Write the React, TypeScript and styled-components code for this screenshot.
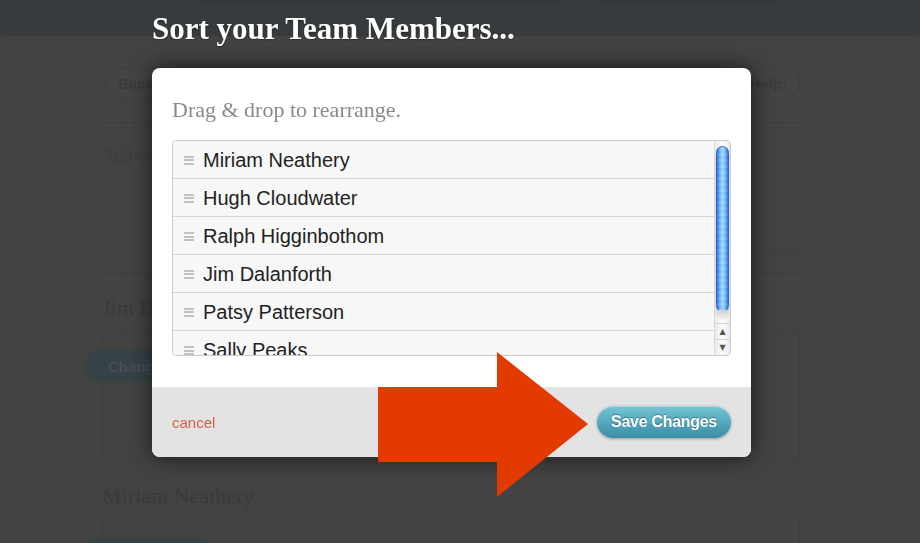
import React from "react";
import styled, { createGlobalStyle } from "styled-components";

const GlobalStyle = createGlobalStyle`
  html, body {
    margin: 0;
    padding: 0;
    background: #434343;
    overflow: hidden;
  }
  * { box-sizing: border-box; }
`;

/* ---------- dimmed page behind the modal ---------- */

const Page = styled.div`
  width: 920px;
  height: 543px;
  overflow: hidden;
  background: #434343;
`;

const TopBar = styled.div`
  height: 34px;
  background: #363c3e;
  display: flex;
  gap: 40px;
  padding: 0 0 0 200px;
  box-shadow: 0 1px 3px rgba(0, 0, 0, 0.25);
`;

const BarShade = styled.div<{ w: number }>`
  width: ${(p) => p.w}px;
  height: 5px;
  margin-top: -1px;
  border-radius: 0 0 4px 4px;
  background: #32383b;
`;

const Column = styled.div`
  width: 700px;
  margin-left: 100px;
  display: flex;
  flex-direction: column;
`;

const NavRow = styled.div`
  display: flex;
  justify-content: space-between;
  padding: 34px 0 0 5px;
  height: 89px;
  border-bottom: 1px solid #3d3d3d;
`;

const GhostPill = styled.div`
  height: 30px;
  padding: 0 12px;
  border-radius: 15px;
  border: 1px solid #3e3e3e;
  background: #444;
  color: #3b3b3b;
  font: bold 15px "Liberation Sans", Arial, sans-serif;
  display: flex;
  align-items: center;
`;

const Hint = styled.div`
  padding: 22px 2px 0;
  height: 150px;
  color: #3d3d3d;
  font: italic 19px "Liberation Serif", Georgia, serif;
  border-bottom: 1px solid #3d3d3d;
`;

const HintLink = styled.div`
  text-align: right;
  margin-top: 78px;
  font: 14px "Liberation Sans", Arial, sans-serif;
  color: #3b4042;
`;

const MemberName = styled.div`
  font: 22px "Liberation Serif", Georgia, serif;
  color: #3a3a3a;
  padding: 22px 2px 0;
  height: 57px;
`;

const MemberCard = styled.div<{ h: number }>`
  height: ${(p) => p.h}px;
  border: 1px solid #3e3e3e;
  border-radius: 6px;
  padding-top: 19px;
  margin-left: 2px;
`;

const ChangeButton = styled.div`
  width: 130px;
  height: 32px;
  margin-left: -19px;
  border-radius: 16px;
  background: #374246;
  color: #465054;
  font: bold 15px "Liberation Sans", Arial, sans-serif;
  display: flex;
  align-items: center;
  padding-left: 24px;
`;

/* ---------- modal ---------- */

const Layer = styled.div`
  position: fixed;
  inset: 0;
`;

const Dialog = styled.div`
  margin-left: 152px;
  width: 599px;
  display: flex;
  flex-direction: column;
`;

const Title = styled.h1`
  margin: 0;
  height: 68px;
  padding-top: 11px;
  color: #fff;
  font: bold 31px/36px "Liberation Serif", Georgia, serif;
  text-shadow: 0 1px 2px rgba(0, 0, 0, 0.4);
`;

const Modal = styled.div`
  background: #fff;
  border-radius: 8px;
  overflow: hidden;
  box-shadow: 0 0 22px rgba(0, 0, 0, 0.65);
`;

const ModalBody = styled.div`
  padding: 26px 20px 31px;
`;

const Instruction = styled.p`
  margin: 0 0 14px;
  color: #8a8a8a;
  font: 22px/32px "Liberation Serif", Georgia, serif;
`;

const ListBox = styled.div`
  height: 216px;
  border: 1px solid #cacaca;
  border-radius: 4px;
  display: flex;
  overflow: hidden;
`;

const Rows = styled.div`
  flex: 1;
  overflow: hidden;
`;

const Row = styled.div`
  height: 38px;
  display: flex;
  align-items: center;
  gap: 9px;
  padding: 2px 0 0 11px;
  background: #f7f7f7;
  border-bottom: 1px solid #d6d6d6;
  color: #222;
  font: 20px "Liberation Sans", Arial, sans-serif;
`;

const Grip = styled.span`
  width: 10px;
  height: 9px;
  flex: none;
  background: linear-gradient(
    #c2c2c2 0 2px,
    transparent 2px 3.5px,
    #c2c2c2 3.5px 5.5px,
    transparent 5.5px 7px,
    #c2c2c2 7px 9px
  );
`;

const ScrollTrack = styled.div`
  width: 16px;
  flex: none;
  border-left: 1px solid #d8d8d8;
  background: linear-gradient(90deg, #eaeaea, #fdfdfd 50%, #eaeaea);
  display: flex;
  flex-direction: column;
  padding-top: 5px;
`;

const Thumb = styled.div`
  height: 166px;
  margin: 0 1px;
  border-radius: 7px;
  border: 1px solid #2364d2;
  background:
    repeating-linear-gradient(180deg, rgba(255, 255, 255, 0.1) 0 3px, transparent 3px 6px),
    linear-gradient(90deg, #2470e0, #78bcfa 30%, #a6d6ff 55%, #62abf5 80%, #246cdc);
  box-shadow: 0 2px 2px rgba(0, 0, 0, 0.2);
`;

const ThumbCap = styled.div`
  height: 10px;
  margin: -2px 1px 0;
  border-radius: 0 0 7px 7px;
  background: linear-gradient(#cfcfcf, #f4f4f4);
`;

const ArrowBtn = styled.div`
  height: 16px;
  display: flex;
  align-items: center;
  justify-content: center;
  color: #555;
  font: 8px "DejaVu Sans", sans-serif;
  border-top: 1px solid #d6d6d6;
`;

const Footer = styled.div`
  height: 70px;
  background: #e3e3e3;
  display: flex;
  align-items: center;
  justify-content: space-between;
  padding: 0 20px;
`;

const CancelLink = styled.a`
  color: #d75f44;
  font: 15px "Liberation Sans", Arial, sans-serif;
  text-decoration: none;
`;

const SaveButton = styled.button`
  width: 134px;
  height: 32px;
  border: none;
  border-radius: 16px;
  background: linear-gradient(#77c6d6, #4ea2b8 60%, #3b8ea6);
  box-shadow: 0 1px 3px rgba(0, 0, 0, 0.35), inset 0 1px 0 rgba(255, 255, 255, 0.35);
  color: #fff;
  font: bold 16px "Liberation Sans", Arial, sans-serif;
  letter-spacing: -0.3px;
  text-shadow: 0 -1px 1px rgba(0, 0, 0, 0.35);
`;

const Pointer = styled.svg`
  position: absolute;
  left: 378px;
  top: 352px;
`;

const members = [
  "Miriam Neathery",
  "Hugh Cloudwater",
  "Ralph Higginbothom",
  "Jim Dalanforth",
  "Patsy Patterson",
  "Sally Peaks",
];

export default function App() {
  return (
    <>
      <GlobalStyle />
      <Page>
        <TopBar>
          <BarShade w={360} />
          <BarShade w={180} />
        </TopBar>
        <Column>
          <NavRow>
            <GhostPill>Back</GhostPill>
            <GhostPill>Help!</GhostPill>
          </NavRow>
          <Hint>
            Add or remove team members, then put them in the order you would like here.
            <HintLink>Change Order</HintLink>
          </Hint>
          <MemberName>Jim Dalanforth</MemberName>
          <MemberCard h={131}>
            <ChangeButton>Change</ChangeButton>
          </MemberCard>
          <MemberName>Miriam Neathery</MemberName>
          <MemberCard h={60}>
            <ChangeButton>Change</ChangeButton>
          </MemberCard>
        </Column>
      </Page>

      <Layer>
        <Dialog>
          <Title>Sort your Team Members...</Title>
          <Modal>
            <ModalBody>
              <Instruction>Drag &amp; drop to rearrange.</Instruction>
              <ListBox>
                <Rows>
                  {members.map((m) => (
                    <Row key={m}>
                      <Grip />
                      {m}
                    </Row>
                  ))}
                </Rows>
                <ScrollTrack>
                  <Thumb />
                  <ThumbCap />
                  <div style={{ flex: 1 }} />
                  <ArrowBtn>▲</ArrowBtn>
                  <ArrowBtn>▼</ArrowBtn>
                </ScrollTrack>
              </ListBox>
            </ModalBody>
            <Footer>
              <CancelLink href="#">cancel</CancelLink>
              <SaveButton>Save Changes</SaveButton>
            </Footer>
          </Modal>
        </Dialog>
        <Pointer width="212" height="146" viewBox="0 0 212 146">
          <path d="M0 35 H119 V0 L210 72 L119 145 V110 H0 Z" fill="#e23a00" />
        </Pointer>
      </Layer>
    </>
  );
}
